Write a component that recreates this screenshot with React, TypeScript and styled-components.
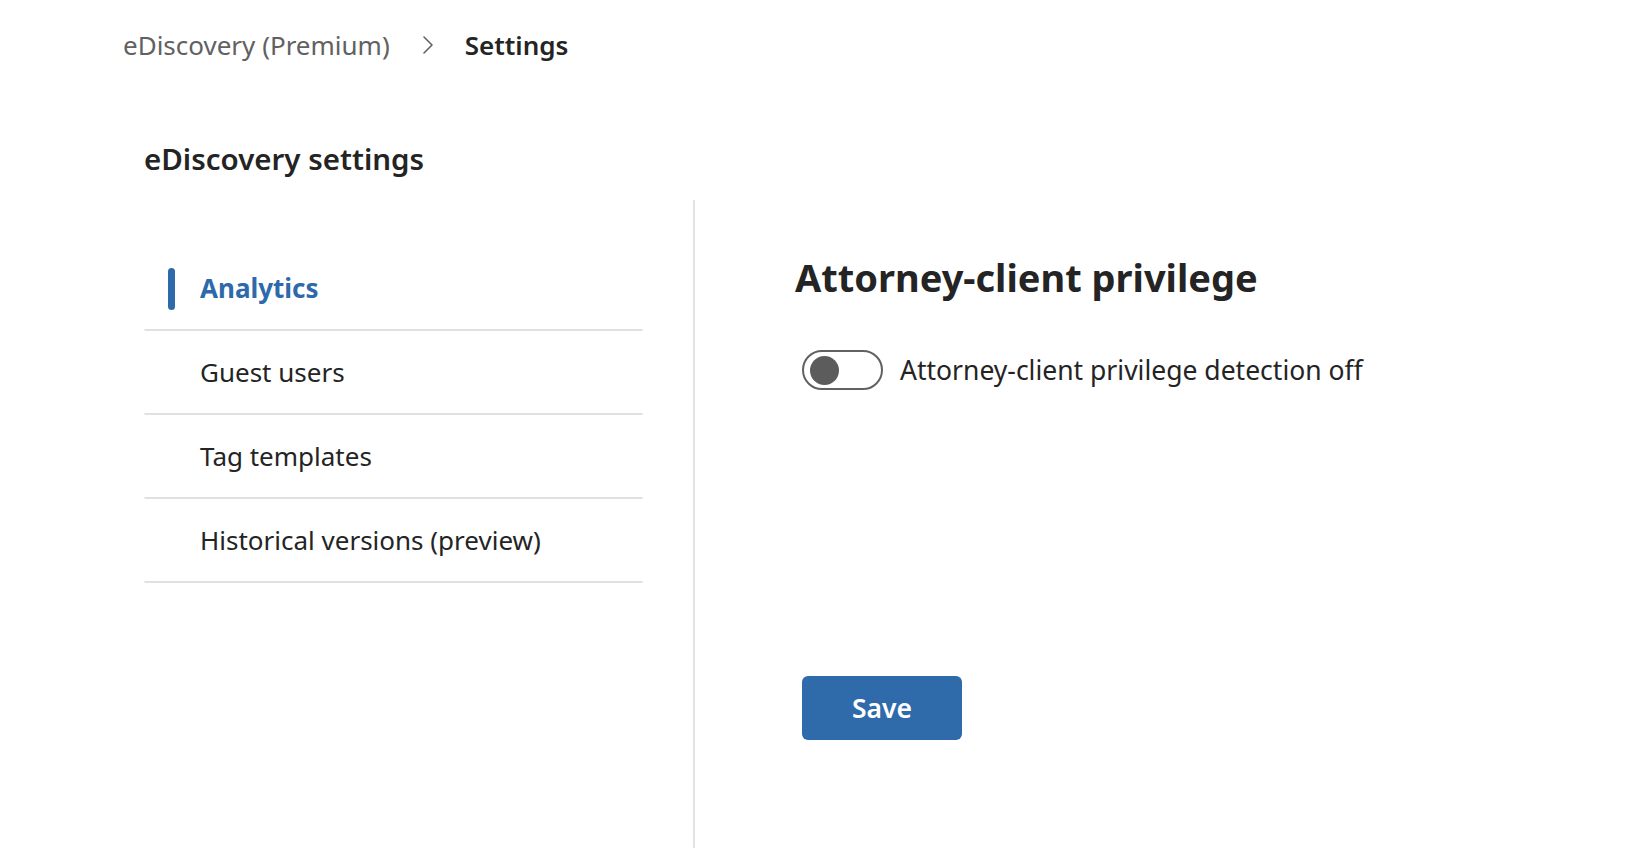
import React, { useState } from "react";
import styled, { createGlobalStyle } from "styled-components";

const Global = createGlobalStyle`
  html, body { margin: 0; padding: 0; background: #ffffff; }
  body { font-family: "Noto Sans", "Open Sans", sans-serif; color: #242424; }
  * { box-sizing: border-box; }
`;

const Page = styled.div`
  width: 1634px;
  height: 848px;
  overflow: hidden;
  padding: 27px 0 0 123px;
  display: flex;
  flex-direction: column;
`;

const Breadcrumb = styled.nav`
  display: flex;
  align-items: center;
  height: 44px;
  font-size: 26px;
`;

const Crumb = styled.span<{ $current?: boolean }>`
  color: ${(p) => (p.$current ? "#242424" : "#616161")};
  font-weight: ${(p) => (p.$current ? 600 : 400)};
`;

const Sep = styled.span`
  display: flex;
  align-items: center;
  margin: 0 31px 0 32px;
`;

const Main = styled.div`
  padding-left: 21px;
  display: flex;
  flex-direction: column;
`;

const Title = styled.h1`
  margin: 76px 0 0 0;
  font-size: 29.5px;
  font-weight: 600;
  line-height: 40px;
  color: #242424;
`;

const Columns = styled.div`
  display: flex;
  margin-top: 21px;
`;

const Nav = styled.ul`
  list-style: none;
  margin: 47px 0 0 0;
  padding: 0;
  width: 499px;
  display: flex;
  flex-direction: column;
`;

const NavItem = styled.li<{ $active?: boolean }>`
  position: relative;
  height: 84px;
  display: flex;
  align-items: center;
  padding-left: 56px;
  font-size: 26px;
  color: ${(p) => (p.$active ? "#2e6aab" : "#242424")};
  font-weight: ${(p) => (p.$active ? 700 : 400)};
  border-bottom: 2px solid #e0e0e0;
  border-radius: 0 0 2px 2px;
  cursor: pointer;
`;

const Indicator = styled.span`
  position: absolute;
  left: 24px;
  top: 21px;
  width: 7px;
  height: 42px;
  border-radius: 4px;
  background: #2e6aab;
`;

const Divider = styled.div`
  width: 2px;
  height: 660px;
  margin-left: 50px;
  background: #e3e3e3;
`;

const Panel = styled.section`
  padding-left: 100px;
  display: flex;
  flex-direction: column;
`;

const PanelTitle = styled.h2`
  margin: 52px 0 0 0;
  font-size: 38px;
  font-weight: 700;
  line-height: 50px;
  color: #242424;
`;

const ToggleRow = styled.label`
  display: flex;
  align-items: center;
  height: 40px;
  margin-top: 48px;
  margin-left: 7px;
  gap: 17px;
  font-size: 26.5px;
  color: #242424;
  cursor: pointer;
`;

const Track = styled.span<{ $on: boolean }>`
  flex: none;
  width: 81px;
  height: 40px;
  border-radius: 20px;
  border: 2px solid ${(p) => (p.$on ? "#2e6aab" : "#616161")};
  background: ${(p) => (p.$on ? "#2e6aab" : "#ffffff")};
  display: flex;
  align-items: center;
  padding: 0 6px;
  justify-content: ${(p) => (p.$on ? "flex-end" : "flex-start")};
`;

const Knob = styled.span<{ $on: boolean }>`
  width: 29px;
  height: 29px;
  border-radius: 50%;
  background: ${(p) => (p.$on ? "#ffffff" : "#5c5c5c")};
`;

const SaveButton = styled.button`
  margin-top: 286px;
  margin-left: 7px;
  width: 160px;
  height: 64px;
  border: none;
  border-radius: 6px;
  background: #2f6aaa;
  color: #ffffff;
  font-family: inherit;
  font-size: 26.5px;
  font-weight: 600;
  cursor: pointer;
`;

const items = ["Analytics", "Guest users", "Tag templates", "Historical versions (preview)"];

export default function App() {
  const [active, setActive] = useState(0);
  const [on, setOn] = useState(false);
  return (
    <>
      <Global />
      <Page>
        <Breadcrumb>
          <Crumb>eDiscovery (Premium)</Crumb>
          <Sep>
            <svg width="12" height="22" viewBox="0 0 12 22" fill="none">
              <path d="M2 3 L10 11 L2 19" stroke="#616161" strokeWidth="1.6" strokeLinecap="round" strokeLinejoin="round" />
            </svg>
          </Sep>
          <Crumb $current>Settings</Crumb>
        </Breadcrumb>
        <Main>
          <Title>eDiscovery settings</Title>
          <Columns>
            <Nav>
              {items.map((it, i) => (
                <NavItem key={it} $active={i === active} onClick={() => setActive(i)}>
                  {i === active && <Indicator />}
                  {it}
                </NavItem>
              ))}
            </Nav>
            <Divider />
            <Panel>
              <PanelTitle>Attorney-client privilege</PanelTitle>
              <ToggleRow onClick={() => setOn(!on)}>
                <Track $on={on}>
                  <Knob $on={on} />
                </Track>
                Attorney-client privilege detection off
              </ToggleRow>
              <SaveButton>Save</SaveButton>
            </Panel>
          </Columns>
        </Main>
      </Page>
    </>
  );
}
